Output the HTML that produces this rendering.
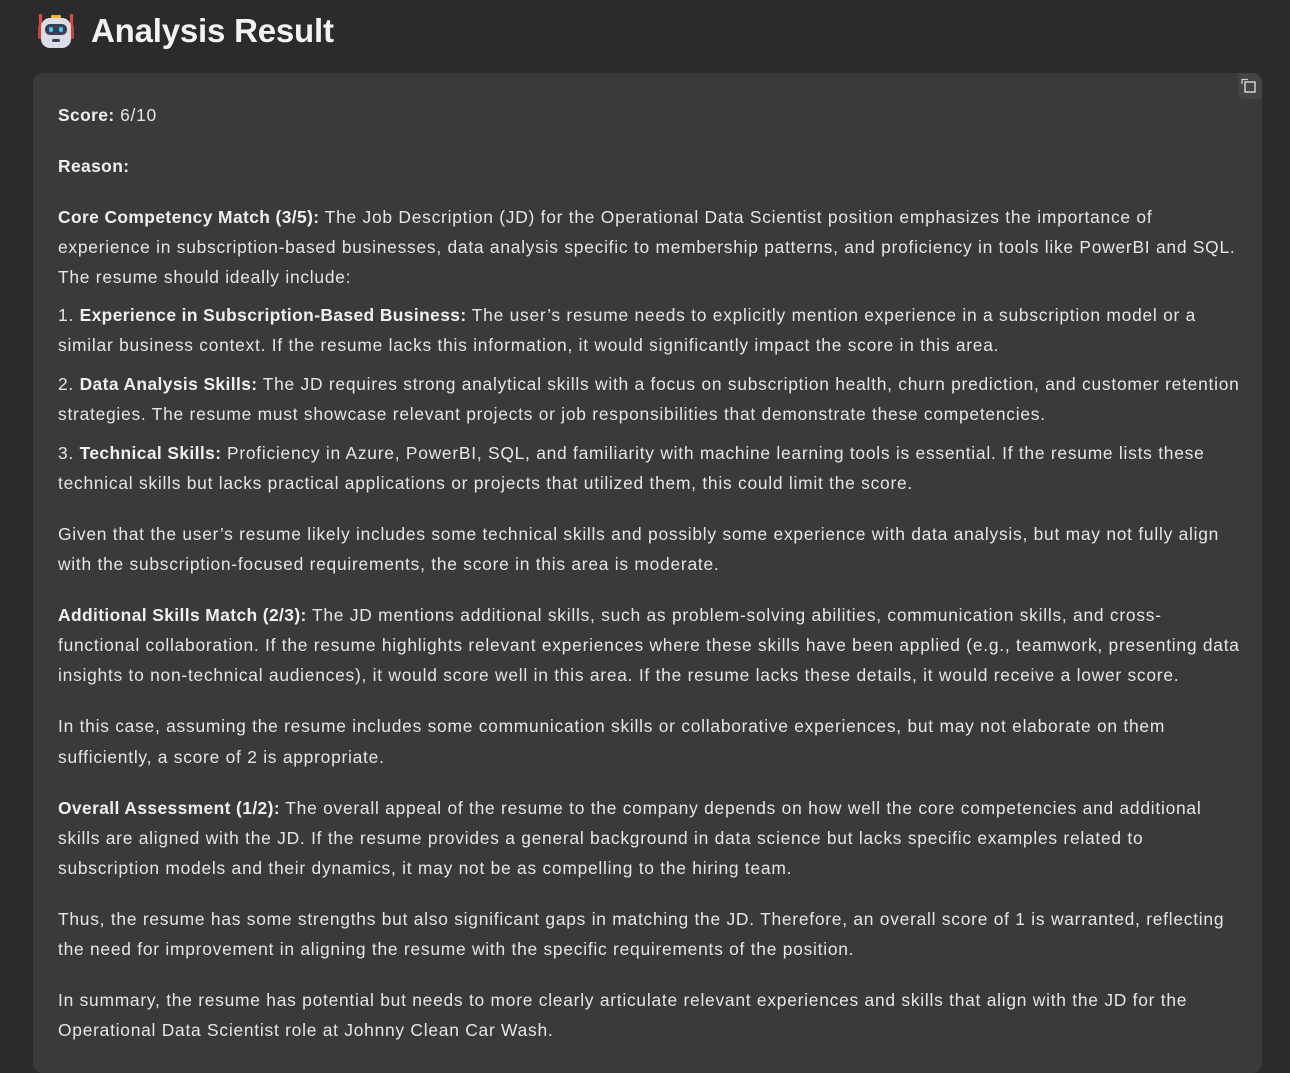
<!DOCTYPE html>
<html><head><meta charset="utf-8"><style>
html,body{margin:0;padding:0;background:#2b2b2d;width:1290px;height:1060px;overflow:hidden;font-family:"Liberation Sans",sans-serif;color:#e6e6e6}
h1{position:absolute;left:91px;top:12px;margin:0;font-size:33px;font-weight:bold;color:#f2f2f2;letter-spacing:-0.2px}
.bot{position:absolute;left:37px;top:13px}
.card{position:absolute;left:33px;top:73px;width:1229px;height:1000px;background:#3a3a3a;border-radius:10px}
.copy{position:absolute;left:1238px;top:73px;width:24px;height:26px;background:#444;border-radius:0 10px 0 6px}
.txt{position:absolute;left:58px;top:100px;width:1200px;font-size:17.4px;line-height:30.2px;white-space:nowrap;letter-spacing:0.75px}
p{margin:0 0 20.8px 0}
p.li{margin:0 0 8.6px 0}
p.pre{margin-bottom:7px}
b{color:#f0f0f0;letter-spacing:0.4px}
</style></head><body>
<svg class="bot" width="38" height="36" viewBox="0 0 38 36">
<rect x="2" y="2" width="3" height="12" fill="#d44"/><rect x="33" y="2" width="3" height="12" fill="#d44"/>
<circle cx="3.5" cy="3" r="2" fill="#d44"/><circle cx="34.5" cy="3" r="2" fill="#d44"/>
<rect x="14" y="2" width="10" height="4" rx="1" fill="#f0b030"/>
<rect x="1" y="12" width="6" height="14" rx="2" fill="#c43"/><rect x="31" y="12" width="6" height="14" rx="2" fill="#c43"/>
<rect x="4" y="5" width="30" height="30" rx="9" fill="#dcdce6"/>
<rect x="8" y="11" width="22" height="11" rx="5" fill="#3a3f55"/>
<rect x="12" y="14" width="4" height="5" rx="2" fill="#4cc3f0"/><rect x="22" y="14" width="4" height="5" rx="2" fill="#4cc3f0"/>
<rect x="15" y="26" width="8" height="3" rx="1.5" fill="#3a3f55"/>
</svg>
<h1>Analysis Result</h1>
<div class="card"></div>
<div class="copy"><svg width="24" height="26" viewBox="0 0 24 26"><path d="M4 11V6.5h6" fill="none" stroke="#ccc" stroke-width="1.3"/><rect x="7" y="9" width="10" height="10" fill="none" stroke="#ddd" stroke-width="1.4"/></svg></div>
<div class="txt">
<p><b>Score:</b> 6/10</p>
<p><b>Reason:</b></p>
<p class="pre"><b>Core Competency Match (3/5):</b> The Job Description (JD) for the Operational Data Scientist position emphasizes the importance of<br>experience in subscription-based businesses, data analysis specific to membership patterns, and proficiency in tools like PowerBI and SQL.<br>The resume should ideally include:</p>
<p class="li">1. <b>Experience in Subscription-Based Business:</b> The user’s resume needs to explicitly mention experience in a subscription model or a<br>similar business context. If the resume lacks this information, it would significantly impact the score in this area.</p>
<p class="li">2. <b>Data Analysis Skills:</b> The JD requires strong analytical skills with a focus on subscription health, churn prediction, and customer retention<br>strategies. The resume must showcase relevant projects or job responsibilities that demonstrate these competencies.</p>
<p>3. <b>Technical Skills:</b> Proficiency in Azure, PowerBI, SQL, and familiarity with machine learning tools is essential. If the resume lists these<br>technical skills but lacks practical applications or projects that utilized them, this could limit the score.</p>
<p>Given that the user’s resume likely includes some technical skills and possibly some experience with data analysis, but may not fully align<br>with the subscription-focused requirements, the score in this area is moderate.</p>
<p><b>Additional Skills Match (2/3):</b> The JD mentions additional skills, such as problem-solving abilities, communication skills, and cross-<br>functional collaboration. If the resume highlights relevant experiences where these skills have been applied (e.g., teamwork, presenting data<br>insights to non-technical audiences), it would score well in this area. If the resume lacks these details, it would receive a lower score.</p>
<p>In this case, assuming the resume includes some communication skills or collaborative experiences, but may not elaborate on them<br>sufficiently, a score of 2 is appropriate.</p>
<p><b>Overall Assessment (1/2):</b> The overall appeal of the resume to the company depends on how well the core competencies and additional<br>skills are aligned with the JD. If the resume provides a general background in data science but lacks specific examples related to<br>subscription models and their dynamics, it may not be as compelling to the hiring team.</p>
<p>Thus, the resume has some strengths but also significant gaps in matching the JD. Therefore, an overall score of 1 is warranted, reflecting<br>the need for improvement in aligning the resume with the specific requirements of the position.</p>
<p>In summary, the resume has potential but needs to more clearly articulate relevant experiences and skills that align with the JD for the<br>Operational Data Scientist role at Johnny Clean Car Wash.</p>
</div>
</body></html>
